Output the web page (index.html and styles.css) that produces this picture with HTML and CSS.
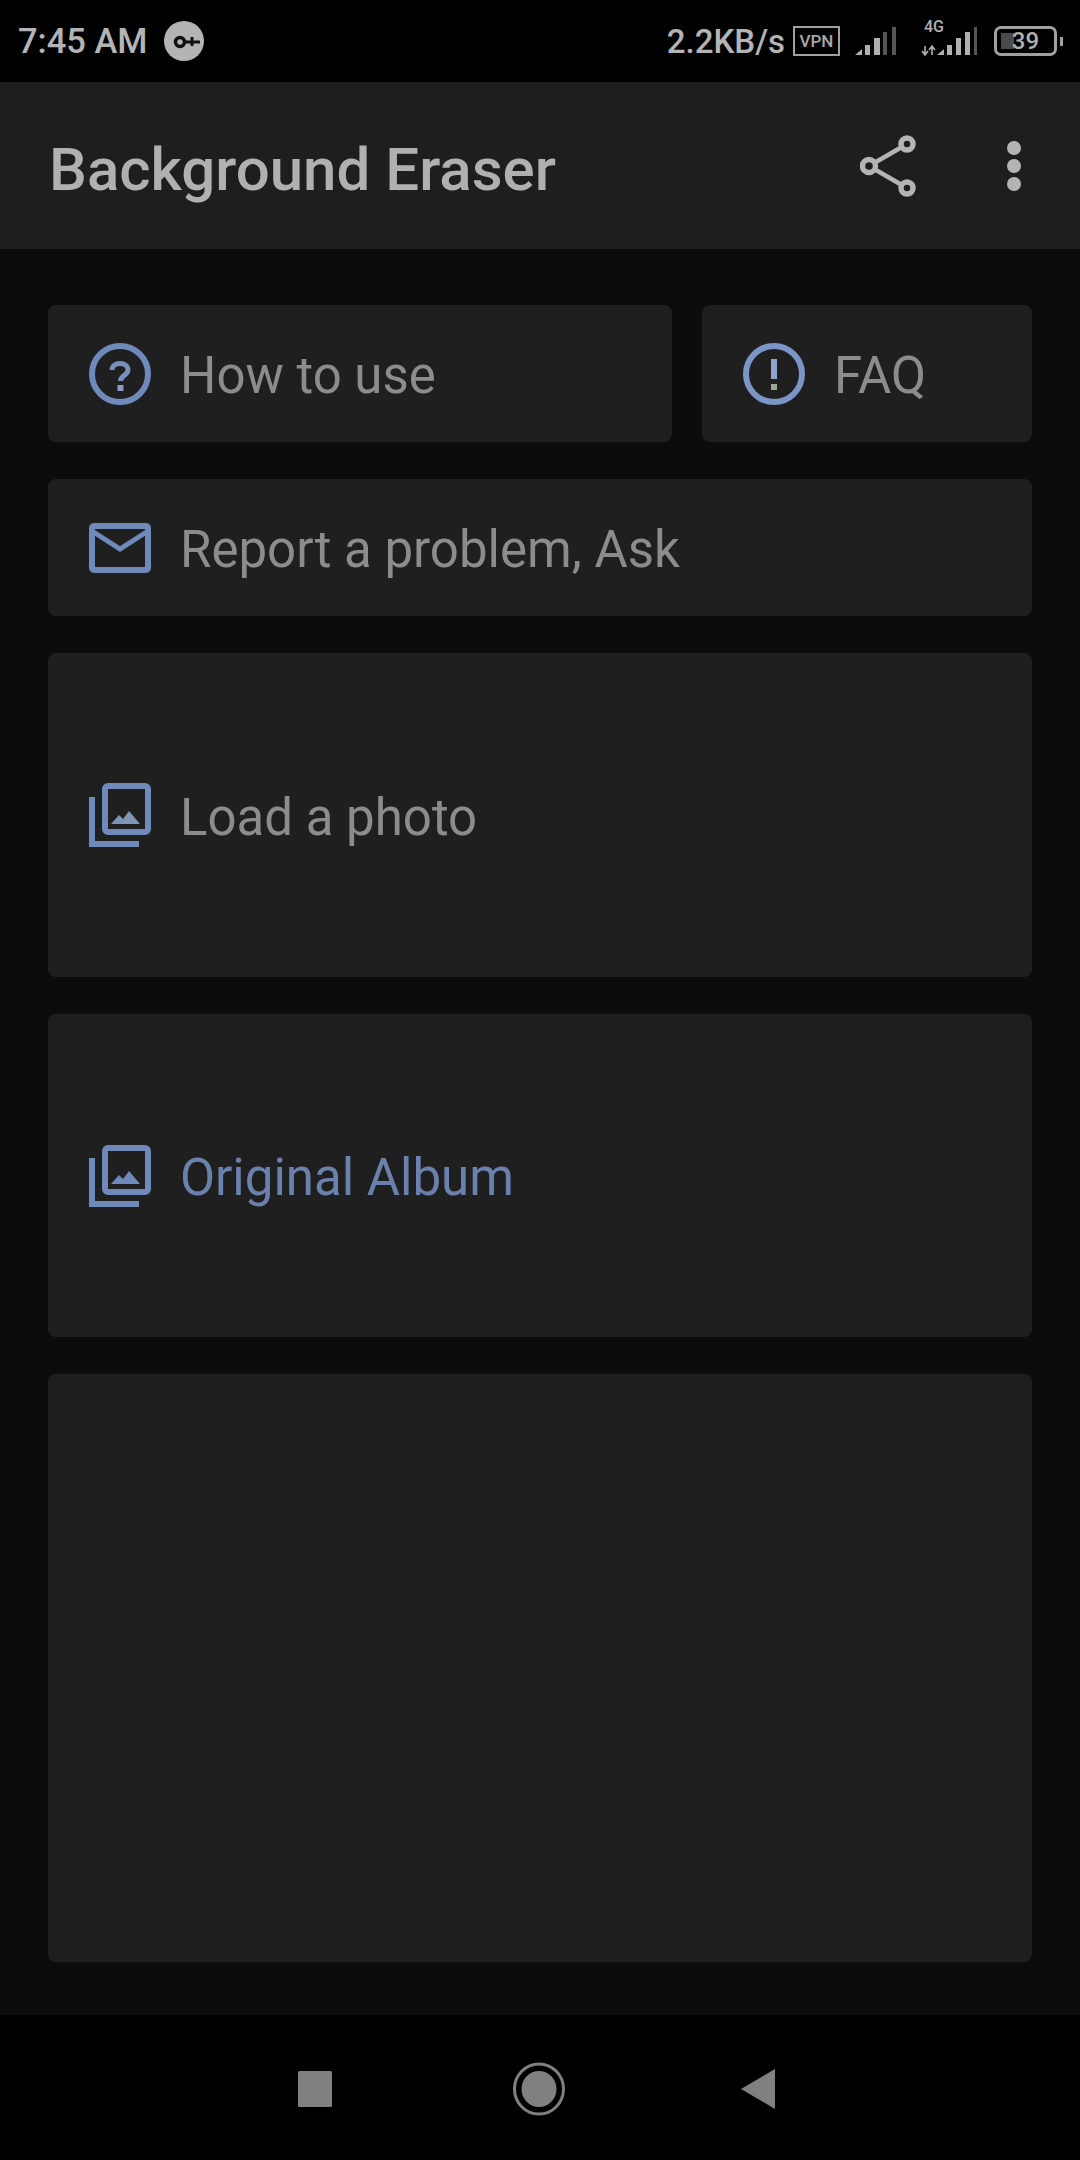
FILE: index.html
```html
<!DOCTYPE html>
<html lang="en">
<head>
<meta charset="utf-8">
<title>Background Eraser</title>
<link rel="stylesheet" href="styles.css">
</head>
<body>
<div class="screen">
  <header class="status">
    <div class="status-left">
      <span class="time">7:45 AM</span>
      <svg class="sync" width="40" height="40" viewBox="0 0 40 40"><circle cx="20" cy="20" r="20" fill="#b4b4b4"/><circle cx="16" cy="21" r="4.500" fill="none" stroke="#111" stroke-width="3.500"/><path d="M21 21h15M28 16v9" fill="none" stroke="#111" stroke-width="3"/></svg>
    </div>
    <div class="status-right">
      <span class="speed">2.2KB/s</span>
      <span class="vpn">VPN</span>
      <svg class="sig1" width="41" height="30" viewBox="0 0 41 30"><path d="M0 29l7-6v6zM10 19h5v10h-5zM19 12h6v17h-6z" fill="#b0b0b0"/><path d="M28 6h4v23h-4zM37 1h4v28h-4z" fill="#555"/></svg>
      <div class="lte">
        <span class="lte-label">4G</span>
        <svg width="56" height="30" viewBox="0 0 56 30"><path d="M4 20v9M1 25l3 4 3-4M11 29v-9M8 24l3-4 3 4" fill="none" stroke="#b0b0b0" stroke-width="1.600"/><path d="M16 29l7-6v6zM26 19h5v10h-5zM35 12h5v17h-5zM44 6h5v23h-5z" fill="#b0b0b0"/><path d="M53 1h3v28h-3z" fill="#555"/></svg>
      </div>
      <div class="battery-wrap">
        <div class="battery"><span class="battery-fill"></span><span class="battery-text">39</span></div>
        <span class="battery-tip"></span>
      </div>
    </div>
  </header>

  <div class="toolbar">
    <h1 class="title">Background Eraser</h1>
    <div class="actions">
      <svg width="56" height="62" viewBox="0 0 56 62"><path d="M47 9L9 31l38 22" fill="none" stroke="#b4b4b4" stroke-width="4.500"/><circle cx="9" cy="31" r="6.500" fill="#1e1e1e" stroke="#b4b4b4" stroke-width="5.500"/><circle cx="47" cy="9" r="6" fill="#1e1e1e" stroke="#b4b4b4" stroke-width="5.500"/><circle cx="47" cy="53" r="6" fill="#1e1e1e" stroke="#b4b4b4" stroke-width="5.500"/></svg>
      <svg width="16" height="52" viewBox="0 0 16 52"><circle cx="8" cy="8" r="7" fill="#b4b4b4"/><circle cx="8" cy="26" r="7" fill="#b4b4b4"/><circle cx="8" cy="44" r="7" fill="#b4b4b4"/></svg>
    </div>
  </div>

  <main class="content">
    <div class="row">
      <a class="card card-wide">
        <svg class="icon" width="62" height="62" viewBox="0 0 62 62"><circle cx="31" cy="31" r="28" fill="none" stroke="#7089bb" stroke-width="6"/><path d="M23 27c0-4 3.500-6.500 8-6.500s8 2.500 8 6.500c0 5-7.500 5.500-7.500 11" fill="none" stroke="#7a90bc" stroke-width="5"/><rect x="28.500" y="42" width="6" height="6" fill="#8a9cc0"/></svg>
        <span class="label">How to use</span>
      </a>
      <a class="card card-narrow">
        <svg class="icon" width="62" height="62" viewBox="0 0 62 62"><circle cx="31" cy="31" r="28" fill="none" stroke="#7b95c6" stroke-width="6"/><rect x="28" y="16" width="6" height="20" fill="#8ea4cc"/><rect x="28" y="41" width="6" height="6" fill="#9aa88f"/></svg>
        <span class="label">FAQ</span>
      </a>
    </div>
    <a class="card card-mail">
      <svg class="icon" width="62" height="50" viewBox="0 0 62 50"><rect x="3" y="3" width="56" height="44" rx="2" fill="none" stroke="#7089bb" stroke-width="6"/><path d="M3 8l28 18L59 8" fill="none" stroke="#7089bb" stroke-width="5"/></svg>
      <span class="label">Report a problem, Ask</span>
    </a>
    <a class="card card-load">
      <svg class="icon" width="62" height="64" viewBox="0 0 62 64"><rect x="16" y="3" width="43" height="46" rx="3" fill="none" stroke="#7089bb" stroke-width="6"/><path d="M3 14v47h47" fill="none" stroke="#7089bb" stroke-width="6"/><path d="M22 41l8-9 4 4 6-8 11 13z" fill="#7f95b8"/></svg>
      <span class="label">Load a photo</span>
    </a>
    <a class="card card-album">
      <svg class="icon" width="62" height="62" viewBox="0 0 62 62"><rect x="16" y="3" width="43" height="44" rx="3" fill="none" stroke="#7089bb" stroke-width="6"/><path d="M3 13v46h47" fill="none" stroke="#7089bb" stroke-width="6"/><path d="M22 39l8-9 4 4 6-8 11 13z" fill="#7089bb"/></svg>
      <span class="label label-accent">Original Album</span>
    </a>
    <div class="card card-empty"></div>
  </main>

  <nav class="nav">
    <svg width="34" height="36" viewBox="0 0 34 36"><rect width="34" height="36" rx="1.500" fill="#808080"/></svg>
    <svg class="nav-home" width="52" height="54" viewBox="0 0 52 54"><ellipse cx="26" cy="27" rx="24.500" ry="25" fill="none" stroke="#808080" stroke-width="3"/><ellipse cx="26" cy="27" rx="17.500" ry="18" fill="#808080"/></svg>
    <svg width="34" height="40" viewBox="0 0 34 40"><path d="M34 0v40L0 20z" fill="#808080"/></svg>
  </nav>
</div>
</body>
</html>
```

FILE: styles.css
```css
* { box-sizing: border-box; }

html, body {
  margin: 0;
  padding: 0;
  background: #0c0c0c;
}

.screen {
  width: 1080px;
  height: 2160px;
  display: flex;
  flex-direction: column;
  font-family: Roboto, "Liberation Sans", sans-serif;
  overflow: hidden;
}

/* Status bar */
.status {
  height: 82px;
  flex: none;
  background: #000;
  color: #b4b4b4;
  display: flex;
  justify-content: space-between;
  align-items: center;
  padding: 0 17px 0 18px;
}

.status-left {
  display: flex;
  align-items: center;
  gap: 16px;
}

.time {
  font-size: 34.500px;
  font-weight: 500;
}

.sync { flex: none; }

.status-right {
  display: flex;
  align-items: center;
}

.speed {
  font-size: 33px;
  font-weight: 500;
  margin-right: 8px;
}

.vpn {
  width: 47px;
  height: 30px;
  border: 2px solid #a0a0a0;
  font-size: 17px;
  font-weight: 500;
  line-height: 26px;
  text-align: center;
  color: #a8a8a8;
}

.sig1 {
  margin-left: 15px;
  margin-right: 25px;
}

.lte {
  position: relative;
  width: 56px;
  height: 30px;
  display: flex;
}

.lte-label {
  position: absolute;
  top: -9px;
  left: 3px;
  font-size: 16px;
  font-weight: 500;
  color: #b0b0b0;
}

.battery-wrap {
  display: flex;
  align-items: center;
  margin-left: 17px;
  gap: 3px;
}

.battery {
  position: relative;
  width: 63px;
  height: 30px;
  border: 3px solid #a0a0a0;
  border-radius: 7px;
  display: flex;
  align-items: center;
  justify-content: center;
}

.battery-fill {
  position: absolute;
  left: 4px;
  top: 4px;
  bottom: 4px;
  width: 13px;
  background: #4a4a4a;
}

.battery-text {
  position: relative;
  font-size: 24px;
  font-weight: 500;
  color: #b0b0b0;
}

.battery-tip {
  width: 3px;
  height: 9px;
  background: #a0a0a0;
}

/* Toolbar */
.toolbar {
  height: 167px;
  flex: none;
  background: #1e1e1e;
  display: flex;
  justify-content: space-between;
  align-items: center;
  padding: 0 58px 0 49px;
}

.title {
  margin: 0;
  padding-top: 7px;
  font-size: 60px;
  font-weight: 500;
  color: #b0b0b0;
}

.actions {
  display: flex;
  align-items: center;
  gap: 90px;
}

/* Cards */
.content {
  flex: 1;
  display: flex;
  flex-direction: column;
  gap: 37px;
  padding: 56px 48px 0;
}

.row {
  display: flex;
  gap: 30px;
}

.card {
  display: flex;
  align-items: center;
  gap: 29px;
  padding-left: 41px;
  background: #1f1f1f;
  border-radius: 8px;
}

.card-wide { width: 624px; height: 137px; }
.card-narrow { flex: 1; height: 137px; }
.card-mail { height: 137px; }
.card-load { height: 324px; }
.card-album { height: 323px; }
.card-empty { height: 588px; }

.icon { flex: none; }

.label {
  padding-top: 4px;
  font-size: 51px;
  color: #8c8c8c;
}

.label-accent { color: #6a80ad; }

/* Navigation bar */
.nav {
  height: 145px;
  flex: none;
  background: #000;
  display: flex;
  align-items: center;
  justify-content: space-between;
  padding: 3px 305px 0 298px;
}

.nav-home { margin-left: 4px; }
```
